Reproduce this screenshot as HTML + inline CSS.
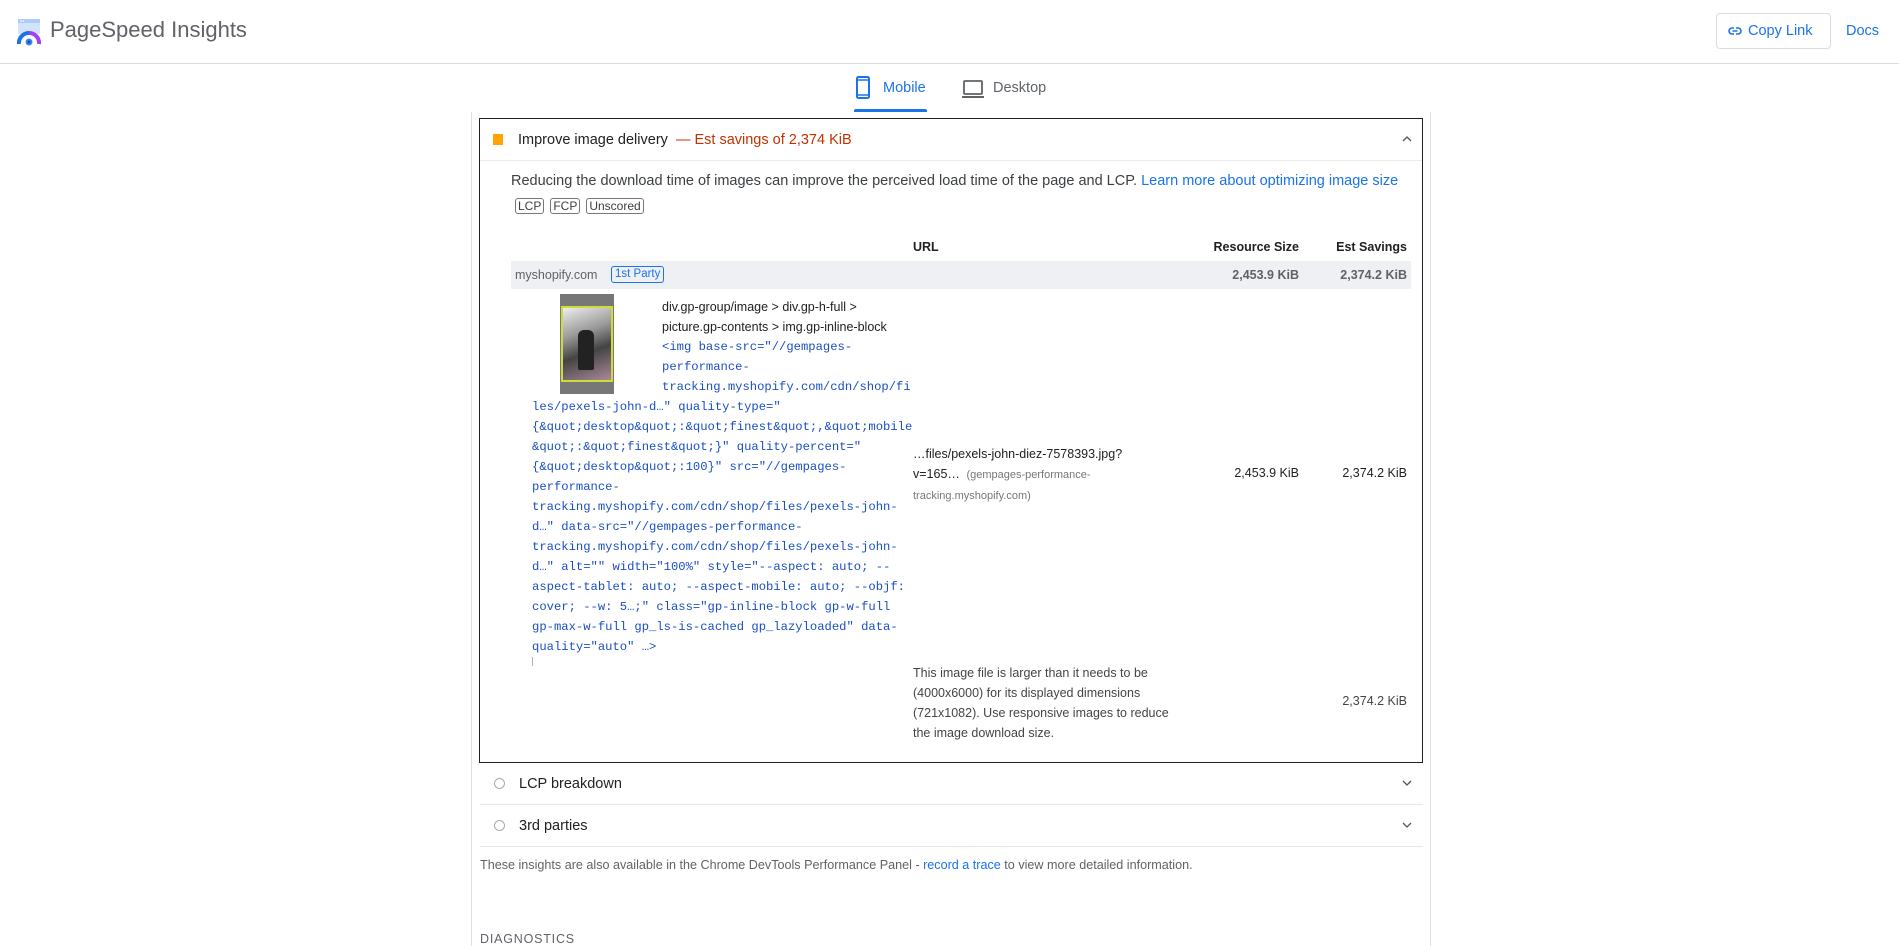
<!DOCTYPE html>
<html><head><meta charset="utf-8"><style>
*{margin:0;padding:0;box-sizing:border-box}
body{width:1899px;height:946px;overflow:hidden;background:#fff;font-family:"Liberation Sans",Arial,sans-serif;color:#202124;position:relative}
.a{position:absolute;white-space:nowrap}
.code{font-family:"Liberation Mono","DejaVu Sans Mono",monospace;font-size:12.2px;color:#1a4fc4}
.g{color:#5f6368}
.s{font-size:12.5px;color:#212121}
</style></head><body>
<svg class="a" style="left:17px;top:18px" width="26" height="28" viewBox="0 0 26 28">
<rect x="1" y="1" width="22" height="15" rx="1" fill="#d2e3fc"/>
<rect x="1" y="1" width="22" height="4" fill="#aecbfa"/>
<circle cx="4" cy="3" r="0.8" fill="#fff"/><circle cx="6.5" cy="3" r="0.8" fill="#fff"/>
<path d="M2 26 A10 10 0 0 1 12 15" stroke="#1a73e8" stroke-width="4" fill="none"/>
<path d="M12 15 A10 10 0 0 1 22 26" stroke="#a142f4" stroke-width="4" fill="none"/>
<circle cx="12" cy="24" r="3.5" fill="#4285f4"/><circle cx="12" cy="24" r="1.5" fill="#174ea6"/>
</svg>
<div class="a" style="left:50px;top:17px;font-size:22px;color:#5f6368">PageSpeed Insights</div>
<div class="a" style="left:1716px;top:13px;width:115px;height:36px;border:1px solid #dadce0;border-radius:4px"></div>
<svg class="a" style="left:1728px;top:26px" width="14" height="10" viewBox="0 0 14 10"><path d="M6 2H4a3 3 0 0 0 0 6h2M8 2h2a3 3 0 0 1 0 6H8M4.5 5h5" stroke="#1a73e8" stroke-width="1.6" fill="none"/></svg>
<div class="a" style="left:1748px;top:23px;font-size:14.5px;color:#1a73e8">Copy Link</div>
<div class="a" style="left:1846px;top:23px;font-size:14.5px;color:#1a73e8">Docs</div>
<div class="a" style="left:0;top:63px;width:1899px;height:1px;background:#dadce0"></div>
<svg class="a" style="left:856px;top:76px" width="14" height="23" viewBox="0 0 14 23"><rect x="1" y="1" width="12" height="21" rx="1.5" stroke="#1a73e8" stroke-width="2" fill="none"/><path d="M1 4h12M1 19h12" stroke="#1a73e8" stroke-width="1.5"/></svg>
<div class="a" style="left:883px;top:80px;font-size:14.5px;color:#1a73e8">Mobile</div>
<div class="a" style="left:854px;top:109px;width:73px;height:3px;background:#1a73e8;border-radius:2px 2px 0 0"></div>
<svg class="a" style="left:962px;top:80px" width="22" height="18" viewBox="0 0 22 18"><rect x="2" y="1" width="18" height="13" rx="1" stroke="#5f6368" stroke-width="1.8" fill="none"/><path d="M0 17h22" stroke="#5f6368" stroke-width="2"/></svg>
<div class="a" style="left:993px;top:80px;font-size:14.5px;color:#5f6368">Desktop</div>
<div class="a" style="left:471px;top:112px;width:1px;height:834px;background:#e0e0e0"></div>
<div class="a" style="left:1430px;top:112px;width:1px;height:834px;background:#e0e0e0"></div>
<div class="a" style="left:479px;top:118px;width:944px;height:645px;border:1.5px solid #202124"></div>
<div class="a" style="left:480px;top:160px;width:942px;height:1px;background:#ebebeb"></div>
<div class="a" style="left:493px;top:134px;width:10px;height:11px;background:#ffa400"></div>
<div class="a" style="left:518px;top:132px;font-size:14.5px">Improve image delivery <span style="color:#c33300">&nbsp;— Est savings of 2,374 KiB</span></div>
<svg class="a" style="left:1402px;top:135px" width="10" height="8" viewBox="0 0 10 8"><path d="M1 6l4-4 4 4" stroke="#555" stroke-width="1.3" fill="none"/></svg>
<div class="a" style="left:511px;top:173px;font-size:14.5px;color:#3c4043">Reducing the download time of images can improve the perceived load time of the page and LCP. <span style="color:#1a73e8">Learn more about optimizing image size</span></div>
<div class="a" style="left:515px;top:199px;font-size:12px;color:#3c4043">
<span style="border:1px solid #777;border-radius:3px;padding:0 2px;margin-right:6px">LCP</span><span style="border:1px solid #777;border-radius:3px;padding:0 2px;margin-right:6px">FCP</span><span style="border:1px solid #777;border-radius:3px;padding:0 2px">Unscored</span></div>
<div class="a" style="left:913px;top:240px;font-size:12.5px;font-weight:bold">URL</div>
<div class="a" style="left:1180px;top:240px;width:119px;text-align:right;font-size:12.5px;font-weight:bold">Resource Size</div>
<div class="a" style="left:1300px;top:240px;width:107px;text-align:right;font-size:12.5px;font-weight:bold">Est Savings</div>
<div class="a" style="left:511px;top:261px;width:900px;height:28px;background:#eef0f3"></div>
<div class="a g" style="left:515px;top:268px;font-size:12.5px">myshopify.com</div>
<div class="a" style="left:611px;top:266px;font-size:11.5px;color:#1a73e8;border:1px solid #1a73e8;border-radius:3px;padding:0 3px;line-height:15px">1st Party</div>
<div class="a" style="left:1180px;top:268px;width:119px;text-align:right;font-size:12.5px;color:#5f6368;font-weight:bold">2,453.9 KiB</div>
<div class="a" style="left:1300px;top:268px;width:107px;text-align:right;font-size:12.5px;color:#5f6368;font-weight:bold">2,374.2 KiB</div>
<div class="a" style="left:560px;top:294px;width:54px;height:100px;background:#777"></div>
<div class="a" style="left:561px;top:306px;width:52px;height:76px;border:2px solid #cddc39;background:linear-gradient(160deg,#eee 0%,#999 35%,#444 60%,#a89 100%)"></div>
<div class="a" style="left:578px;top:330px;width:16px;height:40px;background:#222;border-radius:6px 6px 2px 2px"></div>
<div class="a s" style="left:662px;top:297px;line-height:20px">div.gp-group/image &gt; div.gp-h-full &gt;<br>picture.gp-contents &gt; img.gp-inline-block</div>
<div class="a code" style="left:662px;top:337px;line-height:20px">&lt;img base-src="//gempages-<br>performance-<br>tracking.myshopify.com/cdn/shop/fi</div>
<div class="a code" style="left:532px;top:397px;line-height:20px">les/pexels-john-d…" quality-type="<br>{&amp;quot;desktop&amp;quot;:&amp;quot;finest&amp;quot;,&amp;quot;mobile<br>&amp;quot;:&amp;quot;finest&amp;quot;}" quality-percent="<br>{&amp;quot;desktop&amp;quot;:100}" src="//gempages-<br>performance-<br>tracking.myshopify.com/cdn/shop/files/pexels-john-<br>d…" data-src="//gempages-performance-<br>tracking.myshopify.com/cdn/shop/files/pexels-john-<br>d…" alt="" width="100%" style="--aspect: auto; --<br>aspect-tablet: auto; --aspect-mobile: auto; --objf:<br>cover; --w: 5…;" class="gp-inline-block gp-w-full<br>gp-max-w-full gp_ls-is-cached gp_lazyloaded" data-<br>quality="auto" …&gt;</div>
<div class="a" style="left:532px;top:657px;width:1px;height:9px;background:#aac"></div>
<div class="a s" style="left:913px;top:444px;line-height:20px">…files/pexels-john-diez-7578393.jpg?<br>v=165… <span style="font-size:11px;color:#777">&nbsp;(gempages-performance-</span><br><span style="font-size:11px;color:#777">tracking.myshopify.com)</span></div>
<div class="a s" style="left:1180px;top:466px;width:119px;text-align:right">2,453.9 KiB</div>
<div class="a s" style="left:1300px;top:466px;width:107px;text-align:right">2,374.2 KiB</div>
<div class="a s" style="left:913px;top:663px;line-height:20px;color:#444">This image file is larger than it needs to be<br>(4000x6000) for its displayed dimensions<br>(721x1082). Use responsive images to reduce<br>the image download size.</div>
<div class="a s" style="left:1300px;top:694px;width:107px;text-align:right;color:#444">2,374.2 KiB</div>
<div class="a" style="left:494px;top:778px;width:11px;height:11px;border:1.5px solid #aaa;border-radius:50%"></div>
<div class="a" style="left:519px;top:776px;font-size:14.5px">LCP breakdown</div>
<svg class="a" style="left:1402px;top:779px" width="10" height="8" viewBox="0 0 10 8"><path d="M1 2l4 4 4-4" stroke="#555" stroke-width="1.3" fill="none"/></svg>
<div class="a" style="left:480px;top:804px;width:943px;height:1px;background:#e6e6e6"></div>
<div class="a" style="left:494px;top:820px;width:11px;height:11px;border:1.5px solid #aaa;border-radius:50%"></div>
<div class="a" style="left:519px;top:818px;font-size:14.5px">3rd parties</div>
<svg class="a" style="left:1402px;top:821px" width="10" height="8" viewBox="0 0 10 8"><path d="M1 2l4 4 4-4" stroke="#555" stroke-width="1.3" fill="none"/></svg>
<div class="a" style="left:480px;top:846px;width:943px;height:1px;background:#e6e6e6"></div>
<div class="a" style="left:480px;top:858px;font-size:12.6px;color:#5f6368">These insights are also available in the Chrome DevTools Performance Panel - <span style="color:#1a73e8">record a trace</span> to view more detailed information.</div>
<div class="a" style="left:480px;top:932px;font-size:12.5px;color:#5f6368;letter-spacing:0.8px">DIAGNOSTICS</div>
</body></html>
